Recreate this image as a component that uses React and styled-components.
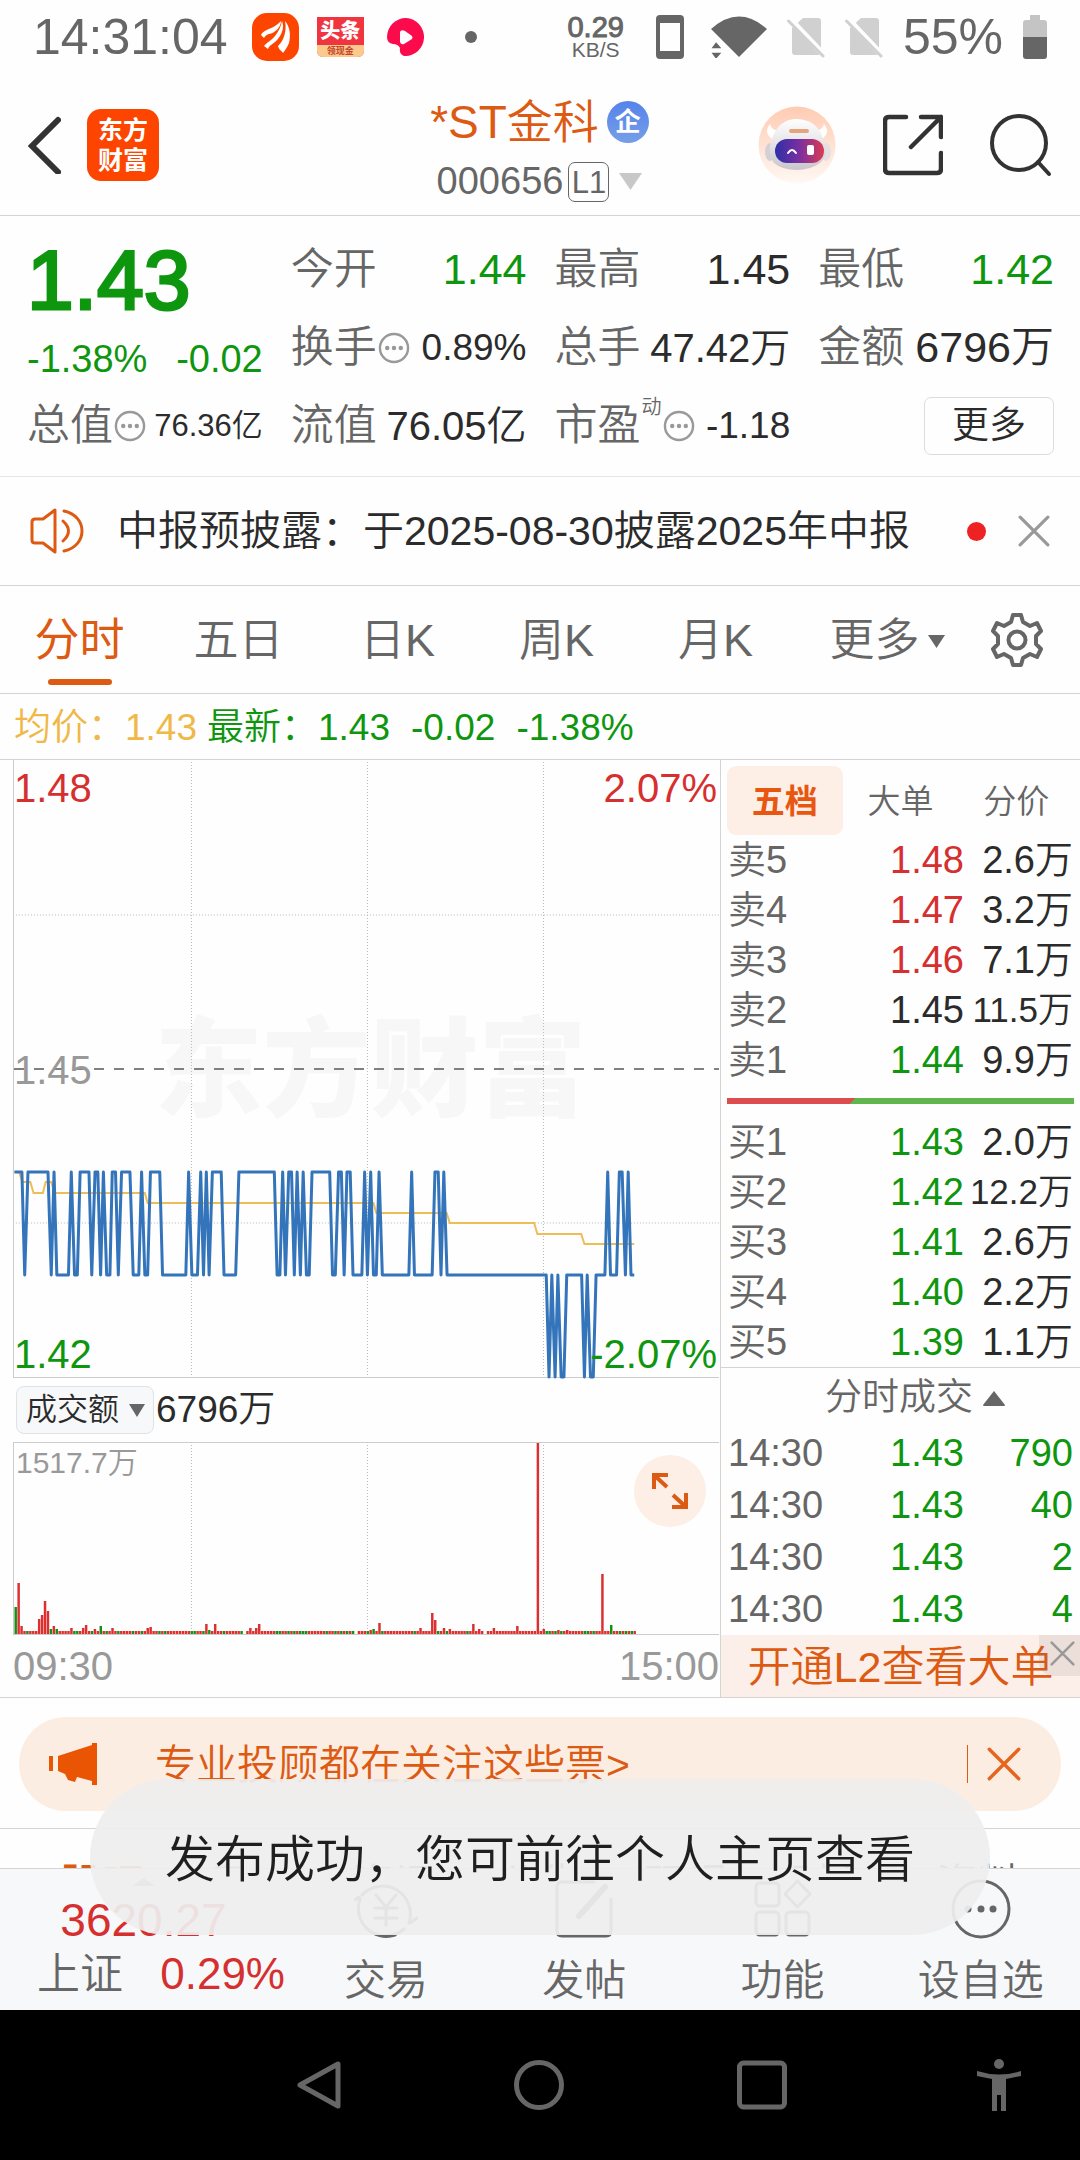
import React from "react";
import styled, { createGlobalStyle, css } from "styled-components";

const c = {
  orange: "#dd5a12",
  brand: "#fe4500",
  green: "#0f960f",
  red: "#d62f2f",
  dark: "#2b2b2b",
  grey: "#666666",
  light: "#999999",
  line: "#d4d4d4",
  peach: "#fdeee6",
};

const GlobalStyle = createGlobalStyle`
  * { box-sizing: border-box; }
  body {
    margin: 0;
    background: #fefefe;
    color: ${c.dark};
    font-family: "Liberation Sans", "Noto Sans CJK SC", sans-serif;
    font-weight: 350;
    line-height: 1.2;
  }
  button, select { font: inherit; color: inherit; background: none; border: 0; padding: 0; margin: 0; }
  button { display: flex; align-items: center; justify-content: center; cursor: pointer; }
  svg { display: block; flex: none; }
  h1, p { margin: 0; font-weight: inherit; }
`;

const Page = styled.div`
  height: 100vh;
  display: flex;
  flex-direction: column;
  overflow: hidden;
  white-space: nowrap;
`;

const Row = styled.div`
  display: flex;
  align-items: center;
  gap: ${(p) => p.$gap || 0}px;
`;

/* status bar */
const StatusBar = styled.div`
  height: 74px;
  flex: none;
  padding: 0 33px;
  display: flex;
  align-items: center;
  justify-content: space-between;
  color: ${c.grey};
  font-size: 50px;
`;
const Clock = styled.span`
  margin-right: 6px;
`;
const NetSpeed = styled.span`
  display: flex;
  flex-direction: column;
  align-items: center;
  margin-right: 12px;
  font-size: 21px;
  line-height: 20px;
  b { font-size: 29px; line-height: 26px; font-weight: 400; -webkit-text-stroke: 1px ${c.grey}; }
`;
const PhoneSlot = styled.span`
  margin-right: 7px;
`;
const NewsBadge = styled.span`
  width: 47px;
  height: 40px;
  margin-right: 5px;
  display: flex;
  flex-direction: column;
  background: #f03540;
  border-radius: 0 0 6px 6px;
  overflow: hidden;
  text-align: center;
  color: #fff;
  font-size: 20px;
  line-height: 28px;
  font-weight: 900;
  small { background: #fbc98c; color: #c4452e; font-size: 9px; line-height: 12px; font-weight: 700; }
`;

/* header */
const Header = styled.header`
  height: 142px;
  flex: none;
  border-bottom: 1px solid ${c.line};
  padding: 0 28px 0 27px;
  display: grid;
  grid-template-columns: 1fr auto 1fr;
  align-items: center;
`;
const AppLogo = styled.span`
  width: 72px;
  height: 72px;
  border-radius: 14px;
  background: ${c.brand};
  color: #fff;
  font-size: 25px;
  line-height: 30px;
  font-weight: 700;
  text-align: center;
  display: flex;
  flex-direction: column;
  justify-content: center;
`;
const TitleBlock = styled.div`
  display: flex;
  flex-direction: column;
  align-items: center;
  gap: 4px;
  padding-top: 10px;
`;
const Title = styled.h1`
  display: flex;
  align-items: center;
  gap: 8px;
  color: ${c.orange};
  font-size: 46px;
  line-height: 60px;
`;
const FirmBadge = styled.span`
  width: 42px;
  height: 42px;
  border-radius: 50%;
  background: linear-gradient(#5583ea, #769ee8);
  color: #fff;
  font-size: 26px;
  line-height: 42px;
  font-weight: 700;
  text-align: center;
`;
const Code = styled.button`
  height: 52px;
  gap: 5px;
  color: ${c.grey};
  font-size: 38px;
`;
const LevelTag = styled.span`
  border: 1px solid ${c.grey};
  border-radius: 7px;
  width: 41px;
  height: 40px;
  font-size: 31px;
  line-height: 40px;
  text-align: center;
  margin-right: 5px;
`;
const Actions = styled.div`
  display: flex;
  align-items: center;
  justify-content: flex-end;
  gap: 47px;
`;

/* quote */
const Quote = styled.section`
  flex: none;
  padding: 15px 26px 11px 27px;
  border-bottom: 1px solid #e6e6e6;
  display: grid;
  grid-template-columns: repeat(4, 1fr);
  grid-auto-rows: 78px;
  column-gap: 28px;
`;
const PriceCell = styled.div`
  grid-row: span 2;
  color: ${c.green};
`;
const Price = styled.div`
  font-size: 84px;
  line-height: 98px;
  font-weight: 400;
  -webkit-text-stroke: 3px ${c.green};
`;
const Change = styled.div`
  display: flex;
  justify-content: space-between;
  font-size: 38px;
  line-height: 60px;
`;
const Cell = styled.div`
  display: flex;
  align-items: center;
  justify-content: space-between;
`;
const Label = styled.span`
  display: flex;
  align-items: center;
  gap: 1px;
  font-size: 43px;
  color: ${c.grey};
`;
const Sup = styled.sup`
  align-self: flex-start;
  font-size: 20px;
  line-height: 14px;
`;
const Value = styled.span`
  font-size: ${(p) => p.$size || 43}px;
  color: ${(p) => p.$color || c.dark};
`;
const MoreButton = styled.button`
  justify-self: end;
  align-self: center;
  width: 130px;
  height: 58px;
  border: 1px solid #dcdcdc;
  border-radius: 7px;
  font-size: 37px;
`;

/* notice */
const Notice = styled.section`
  flex: none;
  height: 109px;
  border-bottom: 1px solid ${c.line};
  padding: 0 30px;
  display: flex;
  align-items: center;
`;
const NoticeText = styled.p`
  flex: 1;
  margin-left: 33px;
  padding-top: 2px;
  font-size: 41px;
`;
const Dot = styled.span`
  width: 19px;
  height: 19px;
  border-radius: 50%;
  background: #ee2222;
`;
const IconButton = styled.button`
  margin-left: ${(p) => p.$left || 0}px;
`;

/* period tabs */
const Tabs = styled.nav`
  flex: none;
  height: 108px;
  border-bottom: 1px solid ${c.line};
  display: grid;
  grid-template-columns: repeat(6, 159fr) 126fr;
`;
const Tab = styled.button`
  position: relative;
  gap: 8px;
  font-size: 45px;
  color: ${c.grey};
  padding: 3px 0 0 ${(p) => (p.$caret ? 25 : 0)}px;
  ${(p) =>
    p.$active &&
    css`
      color: ${c.orange};
      font-weight: 400;
      &::after {
        content: "";
        position: absolute;
        bottom: 8px;
        left: calc(50% - 32px);
        width: 64px;
        height: 6px;
        border-radius: 3px;
        background: ${c.orange};
      }
    `}
`;

const Legend = styled.div`
  flex: none;
  height: 66px;
  border-bottom: 1px solid ${c.line};
  padding: 4px 0 0 14px;
  display: flex;
  align-items: center;
  font-size: 37px;
  color: ${c.green};
`;
const LegendItem = styled.span`
  color: ${(p) => p.$color || "inherit"};
  margin-right: ${(p) => p.$gap}px;
`;

/* market body */
const Market = styled.main`
  flex: none;
  display: grid;
  grid-template-columns: 2fr 1fr;
  border-bottom: 1px solid ${c.line};
`;
const ChartColumn = styled.section`
  padding: 0 1px 0 13px;
`;
const ChartBox = styled.div`
  position: relative;
  height: ${(p) => p.$height}px;
  border-left: 1px solid #cccccc;
  border-bottom: 1px solid #cccccc;
  svg.plot { position: relative; width: 100%; height: 100%; overflow: visible; }
`;
const Watermark = styled.span`
  position: absolute;
  top: 246px;
  left: 8px;
  right: 0;
  text-align: center;
  font-size: 108px;
  line-height: 130px;
  font-weight: 900;
  color: #f7f7f7;
`;
const AxisLabel = styled.span`
  position: absolute;
  font-size: ${(p) => p.$size || 40}px;
  line-height: 40px;
  color: ${(p) => p.$color};
  ${(p) => p.$place}
`;
const VolumeBar = styled.div`
  height: 65px;
  border-bottom: 1px solid #cccccc;
  padding-left: 3px;
  display: flex;
  align-items: center;
  gap: 2px;
  font-size: 37px;
`;
const SelectWrap = styled.label`
  position: relative;
  display: block;
  svg { position: absolute; right: 9px; top: 18px; pointer-events: none; }
`;
const MetricSelect = styled.select`
  appearance: none;
  display: block;
  width: 138px;
  height: 48px;
  padding: 0 0 0 9px;
  border: 1px solid #e0e3e6;
  border-radius: 8px;
  background: #f7f8fa;
  font-size: 31px;
`;
const ExpandButton = styled.button`
  position: absolute;
  right: 13px;
  top: 12px;
  width: 72px;
  height: 72px;
  border-radius: 50%;
  background: ${c.peach};
`;
const TimeAxis = styled.div`
  height: 62px;
  display: flex;
  align-items: center;
  justify-content: space-between;
  font-size: 40px;
  color: ${c.light};
`;

/* order book */
const Book = styled.section`
  border-left: 1px solid ${c.line};
`;
const BookTabs = styled.div`
  display: grid;
  grid-template-columns: repeat(3, 1fr);
  padding: 6px 6px 0;
  height: 75px;
`;
const BookTab = styled.button`
  padding-top: 2px;
  font-size: 33px;
  color: ${c.grey};
  border-radius: 9px;
  ${(p) =>
    p.$active &&
    css`
      background: ${c.peach};
      color: #e8560f;
      font-weight: 700;
    `}
`;
const Table = styled.table`
  width: calc(100% - 14px);
  margin: 0 7px;
  table-layout: fixed;
  border-collapse: collapse;
  font-size: 38px;
  tr { height: ${(p) => p.$row}px; }
  th, td { padding: 0; line-height: 44px; font-weight: inherit; text-align: right; vertical-align: middle; }
  th { width: 110px; color: ${c.grey}; text-align: left; }
  td:last-child { width: 109px; }
`;
const Num = styled.td`
  color: ${(p) => p.$color || c.dark};
  font-size: ${(p) => (p.$small ? 35 : 38)}px;
`;
const RatioBar = styled.div`
  margin: 13px 6px;
  height: 6px;
  background: linear-gradient(135deg, #de4d4d 0 36.5%, #61b54d 36.5%);
`;
const TradesHead = styled.button`
  width: 100%;
  height: 60px;
  padding: 2px 0 0 29px;
  border-top: 1px solid ${c.line};
  gap: 10px;
  font-size: 37px;
  color: ${c.grey};
`;
const LevelTwo = styled.div`
  position: relative;
  height: 62px;
  background: #fcefe9;
  display: flex;
  justify-content: center;
  a { color: ${c.orange}; text-decoration: none; font-size: 43px; line-height: 64px; }
`;
const LevelTwoClose = styled.button`
  position: absolute;
  top: 0;
  right: 0;
  width: 41px;
  height: 41px;
  padding: 0 5px 4px 0;
  justify-content: flex-end;
  border-bottom-left-radius: 14px;
  background: rgba(120, 100, 100, 0.12);
`;

/* promo */
const Promo = styled.aside`
  flex: none;
  margin: 19px 19px 17px;
  height: 94px;
  border-radius: 47px;
  background: #fcede3;
  padding: 0 40px 0 30px;
  display: flex;
  align-items: center;
  color: ${c.orange};
  font-size: 41px;
  a { flex: 1; margin-left: 57px; padding-top: 4px; color: inherit; text-decoration: none; }
`;
const Divider = styled.span`
  width: 1px;
  height: 38px;
  background: ${c.orange};
`;
const Sections = styled.nav`
  flex: 1;
  min-height: 0;
  overflow: hidden;
  border-top: 1px solid ${c.line};
  padding: 26px 29px 0;
  display: grid;
  grid-template-columns: repeat(7, 1fr);
`;
const SectionTab = styled.button`
  height: 60px;
  font-size: 42px;
  color: ${(p) => (p.$active ? c.orange : c.grey)};
  font-weight: ${(p) => (p.$active ? 500 : 350)};
`;

/* bottom bar */
const BottomBar = styled.nav`
  flex: none;
  height: 142px;
  background: #f7f8fa;
  border-top: 1px solid ${c.line};
  display: grid;
  grid-template-columns: 287px repeat(4, 1fr);
`;
const IndexItem = styled.button`
  flex-direction: column;
  justify-content: flex-start;
  padding-top: 9px;
  color: ${c.red};
`;
const IndexValue = styled.span`
  font-size: 46px;
  line-height: 68px;
`;
const IndexChange = styled.span`
  width: 100%;
  padding: 0 2px 0 37px;
  display: flex;
  justify-content: space-between;
  font-size: 44px;
  line-height: 40px;
  em { font-style: normal; color: ${c.grey}; font-size: 43px; }
`;
const NavItem = styled.button`
  flex-direction: column;
  justify-content: flex-start;
  padding-top: 10px;
  gap: 12px;
  color: ${c.grey};
  font-size: 42px;
  line-height: 60px;
`;
const SystemNav = styled.div`
  flex: none;
  height: 150px;
  background: #000;
  display: grid;
  grid-template-columns: 209px 220px 220px 226px 1fr;
`;
const AccessButton = styled.button`
  justify-self: end;
  padding-right: 57px;
`;
const Toast = styled.div`
  position: fixed;
  left: 90px;
  right: 90px;
  bottom: 225px;
  height: 156px;
  padding-top: 5px;
  border-radius: 78px;
  background: rgba(238, 238, 238, 0.93);
  color: #1f1f1f;
  display: flex;
  align-items: center;
  justify-content: center;
  font-size: 50px;
`;

/* ---------- data ---------- */

const PLOT_X = 30;
const PLOT_W = 1514;
const LEVEL = { H: 412, M: 515, L: 617 };

const PRICE_RUNS =
  "H31-47 M53 H60-103 M110 H116 M122-147 H153 M160-166 H172-191 M197 H204-210 M216 H222 M229-236 H241-248 M254 H261-279 M286-298 H304 M311-317 H323-343 M349-399 H405 M412-424 H431 M437 H443 M449 H456-475 M481-506 H513-589 M595-601 H607 M613 H620-626 M632 H638 M645 H651 M658-664 H670-708 M714-720 H727-733 M739 H745-752 M758-777 H783 M789 H796 M802-808 H814 M821-878 H884 M890-928 H934-941 M947 H953 M960-1173 L1179 M1185 L1192 M1198 L1205-1211 M1217-1249 L1255 M1261 L1268-1274 M1280-1299 H1305 M1311-1324 H1330-1336 M1343 H1349 M1355-1362";

const pricePoints = PRICE_RUNS.split(" ")
  .flatMap((run) => run.slice(1).split("-").map((x) => `${x},${LEVEL[run[0]]}`))
  .join(" ");

const AVERAGE =
  "31,412 41,412 48,422 65,422 72,433 92,433 98,422 110,422 117,433 311,433 317,443 802,443 808,453 959,453 966,463 1147,463 1154,474 1248,474 1255,484 1362,484";

const VOLUME_PEAKS = {
  0: [27, 1], 1: [51], 2: [8], 8: [15], 9: [19], 10: [33], 11: [23], 12: [5, 1], 13: [8], 14: [5, 1],
  19: [6], 23: [6], 24: [9], 27: [5], 29: [8, 1], 33: [6], 45: [6], 46: [7], 65: [10], 66: [4, 1], 68: [10],
  80: [6], 82: [6], 83: [10], 121: [4], 122: [5, 1], 124: [11], 138: [6], 142: [21], 143: [14], 146: [6],
  148: [5], 156: [10], 158: [5], 163: [6], 171: [8], 178: [191], 180: [5], 185: [4], 188: [4], 200: [60], 203: [9, 1],
};
const VOLUME_GAPS = [78, 116, 160];
const QUIET_GREEN = [4, 20, 21, 26, 31, 35, 40, 43, 49, 51, 60, 61, 64, 71, 77, 89, 90, 93, 95, 97, 98, 99, 106, 109, 111, 113, 115, 120, 125, 136, 144, 147, 154, 181, 182, 184, 186, 194, 195, 197, 206, 208, 210];

const volumeBars = Array.from({ length: 212 }, (_, i) => {
  const peak = VOLUME_PEAKS[i];
  return {
    x: 31 + i * 6.3,
    h: VOLUME_GAPS.includes(i) ? 0 : peak ? peak[0] : 3,
    green: peak ? Boolean(peak[1]) : QUIET_GREEN.includes(i),
  };
});

const SELLS = [
  ["卖5", "1.48", "2.6万", c.red],
  ["卖4", "1.47", "3.2万", c.red],
  ["卖3", "1.46", "7.1万", c.red],
  ["卖2", "1.45", "11.5万", c.dark],
  ["卖1", "1.44", "9.9万", c.green],
];
const BUYS = [
  ["买1", "1.43", "2.0万", c.green],
  ["买2", "1.42", "12.2万", c.green],
  ["买3", "1.41", "2.6万", c.green],
  ["买4", "1.40", "2.2万", c.green],
  ["买5", "1.39", "1.1万", c.green],
];
const TRADES = ["790", "40", "2", "4"];

/* ---------- drawings ---------- */

const Triangle = ({ w, h, color, up }) => (
  <svg width={w} height={h} viewBox="0 0 20 16" preserveAspectRatio="none" fill={color}>
    <path d={up ? "M10 0 L20 15 Q20 16 19 16 H1 Q0 16 0 15Z" : "M0 0H20L10 16Z"} />
  </svg>
);

const Cross = ({ size, color, width = 3 }) => (
  <svg width={size} height={size} viewBox="0 0 30 30" stroke={color} strokeWidth={width} strokeLinecap="round">
    <path d="M2 2L28 28M28 2L2 28" />
  </svg>
);

const Info = () => (
  <svg width="32" height="32" viewBox="0 0 33 33">
    <circle cx="16.5" cy="16.5" r="14.5" fill="none" stroke="#999" strokeWidth="2.5" />
    <g fill="#999">
      <circle cx="9.5" cy="16.5" r="2.3" />
      <circle cx="16.5" cy="16.5" r="2.3" />
      <circle cx="23.5" cy="16.5" r="2.3" />
    </g>
  </svg>
);

const FundIcon = () => (
  <svg width="47" height="48" viewBox="0 0 47 48">
    <rect width="47" height="48" rx="15" fill="#fe4500" />
    <g fill="#fff">
      <path d="M9 22C11 17 19 16 23 13C26 11 28 9 29 8C29 14 23 20 17 21C14 22 13 23 12 25Z" />
      <path d="M12 33C14 30 19 28 23 23C27 18 29 13 30 8C33 15 29 24 23 29C19 32 17 33 16 36Z" />
      <path d="M33 8C38 14 39 22 37 30C35 35 33 37 31 40C29 37 27 37 26 33C32 28 35 17 33 8Z" />
    </g>
  </svg>
);

const PlayIcon = () => (
  <svg width="38" height="38" viewBox="0 0 38 38">
    <path d="M19 0A18 18 0 1 1 17 38Q12 36 13 30Q11 26 6 26Q0 25 0 19A19 19 0 0 1 19 0Z" fill="#fb0b4b" />
    <path d="M13 14Q14 11 18 13L25 18Q26 19.500 25 21L17 26Q14 27 13 24Z" fill="#fff" />
  </svg>
);

const PhoneIcon = () => (
  <svg width="28" height="44" viewBox="0 0 28 44">
    <path fillRule="evenodd" fill="#666" d="M4 0H24Q28 0 28 4V40Q28 44 24 44H4Q0 44 0 40V4Q0 0 4 0ZM4 8V36H24V8Z" />
  </svg>
);

const WifiIcon = () => (
  <svg width="56" height="42" viewBox="0 0 56 42" fill="#666">
    <path d="M0 13Q28 -12 56 13L28 41Z" />
    <path d="M-1 33L5 25L12 33ZM-1 36H12L5 44Z" stroke="#fefefe" strokeWidth="1.500" />
  </svg>
);

const SimIcon = () => (
  <svg width="38" height="42" viewBox="0 0 38 42">
    <path d="M5 12L16 2H31Q34 2 34 5V36Q34 39 31 39H8Q5 39 5 36Z" fill="#d0d0d0" />
    <path d="M3 3L37 39" stroke="#fefefe" strokeWidth="6" />
    <path d="M1.500 5L36 40" stroke="#d0d0d0" strokeWidth="3" strokeLinecap="round" />
  </svg>
);

const BatteryIcon = () => (
  <svg width="24" height="44" viewBox="0 0 24 44">
    <path d="M7 0H17V5H21Q24 5 24 8V22H0V8Q0 5 3 5H7Z" fill="#c4c4c4" />
    <path d="M0 22H24V41Q24 44 21 44H3Q0 44 0 41Z" fill="#666" />
  </svg>
);

const BackIcon = () => (
  <svg width="34" height="58" viewBox="0 0 34 58" fill="none" stroke="#333" strokeWidth="6" strokeLinecap="round">
    <path d="M31 4L5 30L31 56" />
  </svg>
);

const RobotIcon = () => (
  <svg width="78" height="78" viewBox="0 0 78 78">
    <defs>
      <linearGradient id="halo" x1="0" y1="0" x2="0" y2="1">
        <stop offset="0" stopColor="#ffcbb2" />
        <stop offset="1" stopColor="#fff8f4" />
      </linearGradient>
      <linearGradient id="visor">
        <stop offset="0" stopColor="#2e2fa8" />
        <stop offset="0.5" stopColor="#7a2fa0" />
        <stop offset="1" stopColor="#dc3b52" />
      </linearGradient>
      <linearGradient id="shell" x1="0" y1="0" x2="0" y2="1">
        <stop offset="0" stopColor="#ffffff" />
        <stop offset="1" stopColor="#c9c5cc" />
      </linearGradient>
    </defs>
    <circle cx="39" cy="39" r="38.500" fill="url(#halo)" />
    <path d="M12 18Q5 26 14 33L24 24Q14 26 12 18ZM66 18Q73 26 64 33L54 24Q64 26 66 18Z" fill="#fff" />
    <ellipse cx="12" cy="46" rx="5" ry="9" fill="#d4cfd4" />
    <ellipse cx="68" cy="46" rx="5" ry="9" fill="#e6dfe2" />
    <path d="M39 13Q58 14 64 30Q72 48 62 57Q52 64 39 64Q24 64 16 57Q8 47 15 30Q22 13 39 13Z" fill="url(#shell)" />
    <rect x="31" y="23" width="20" height="4" rx="2" fill="#e5a57c" />
    <rect x="17" y="33" width="49" height="24" rx="12" fill="url(#visor)" />
    <path d="M30 47Q34 41 38 47" fill="none" stroke="#fff" strokeWidth="2" strokeLinecap="round" />
    <rect x="49" y="39" width="7" height="10" rx="2" fill="#fff" />
  </svg>
);

const ShareIcon = () => (
  <svg width="60" height="62" viewBox="0 0 60 62" fill="none" stroke="#333" strokeWidth="4.500" strokeLinecap="round" strokeLinejoin="round">
    <path d="M23 3H6Q2 3 2 7V55Q2 59 6 59H54Q58 59 58 55V39" />
    <path d="M38 3H58V23M58 3L28 33" />
  </svg>
);

const SearchIcon = () => (
  <svg width="62" height="64" viewBox="0 0 62 64" fill="none" stroke="#333" strokeWidth="4" strokeLinecap="round">
    <circle cx="29" cy="30" r="27" />
    <path d="M48 49L59 61" />
  </svg>
);

const SpeakerIcon = () => (
  <svg width="54" height="46" viewBox="0 0 54 46" fill="none" stroke="#dd5a12" strokeWidth="3" strokeLinecap="round" strokeLinejoin="round">
    <path d="M25 2L13 11H5Q2 11 2 14V32Q2 35 5 35H13L25 44Z" />
    <path d="M33 13Q44 23 33 33M34 3C58 8 58 38 34 43" />
  </svg>
);

const GearIcon = () => (
  <svg width="54" height="54" viewBox="0 0 54 54" fill="none" stroke="#666" strokeWidth="4" strokeLinejoin="round">
    <path d="M23 2H31L33 9L40 13L47 10L51 18L46 23V31L51 36L47 44L40 41L33 45L31 52H23L21 45L14 41L7 44L3 36L8 31V23L3 18L7 10L14 13L21 9Z" />
    <circle cx="27" cy="27" r="8.500" />
  </svg>
);

const ExpandIcon = () => (
  <svg width="38" height="38" viewBox="0 0 38 38" fill="none" stroke="#dd5a12" strokeWidth="4">
    <path d="M3 17V3H17M3 3L16 15M35 21V35H21M35 35L22 23" />
  </svg>
);

const HornIcon = () => (
  <svg width="49" height="42" viewBox="0 0 49 42" fill="#ea5504">
    <path d="M0 13H4V28H0ZM9 13L43 2V0H48V42H43V38L28 34L26 39L19 37L16 31L9 28Z" />
  </svg>
);

const navIcon = { width: 64, height: 60, viewBox: "0 0 64 60", fill: "none", stroke: "#666", strokeWidth: 3, strokeLinecap: "round" };

const TradeIcon = () => (
  <svg {...navIcon}>
    <path d="M8 16A28 28 0 0 1 55 44M56 44L63 39M41 56A28 28 0 0 1 6 20M5 18L1 21M12 49A28 28 0 0 0 50 50" />
    <path d="M22 16L32 28L42 16M21 29H43M21 39H43M32 28V46" />
  </svg>
);
const PostIcon = () => (
  <svg {...navIcon}>
    <path d="M42 3H10Q5 3 5 8V52Q5 57 10 57H54Q59 57 59 52V20" />
    <path d="M53 8L27 37" strokeWidth="6" />
  </svg>
);
const FeatureIcon = () => (
  <svg {...navIcon}>
    <rect x="5" y="4" width="23" height="23" rx="4" />
    <rect x="5" y="33" width="23" height="23" rx="4" />
    <rect x="35" y="33" width="23" height="23" rx="4" />
    <path d="M46.500 2L59 15L46.500 28L34 15Z" strokeLinejoin="round" />
  </svg>
);
const DotsIcon = () => (
  <svg {...navIcon}>
    <circle cx="32" cy="30" r="28" />
    <g fill="#666" stroke="none">
      <circle cx="19" cy="30" r="3.500" />
      <circle cx="32" cy="30" r="3.500" />
      <circle cx="44" cy="30" r="3.500" />
    </g>
  </svg>
);

const sysIcon = { width: 52, height: 52, viewBox: "0 0 52 52", fill: "none", stroke: "#666", strokeWidth: 5 };

const OrderTable = ({ rows, label }) => (
  <Table $row={50} aria-label={label}>
    <tbody>
      {rows.map(([name, price, vol, color]) => (
        <tr key={name}>
          <th scope="row">{name}</th>
          <Num $color={color}>{price}</Num>
          <Num $small={vol.length > 4}>{vol}</Num>
        </tr>
      ))}
    </tbody>
  </Table>
);

const Stat = ({ label, value, size, color, info, sup }) => (
  <Cell>
    <Label>
      {label}
      {sup && <Sup>{sup}</Sup>}
      {info && <Info />}
    </Label>
    <Value $size={size} $color={color}>{value}</Value>
  </Cell>
);

const GridLines = ({ height, rows = [] }) => (
  <g stroke="#b8b8b8" strokeWidth="1" strokeDasharray="1 2">
    {[411, 789, 1167].map((x) => (
      <path key={x} d={`M${x} 2V${height}`} vectorEffect="non-scaling-stroke" />
    ))}
    {rows.map((y) => (
      <path key={y} d={`M34 ${y}H1544`} vectorEffect="non-scaling-stroke" />
    ))}
  </g>
);

export default function App() {
  return (
    <Page>
      <GlobalStyle />
      <StatusBar>
        <Row $gap={18}>
          <Clock>14:31:04</Clock>
          <FundIcon />
          <NewsBadge>
            头条<small>领现金</small>
          </NewsBadge>
          <PlayIcon />
          <svg width="54" height="12" viewBox="0 0 54 12"><circle cx="28" cy="6" r="6" fill="#666" /></svg>
        </Row>
        <Row $gap={20}>
          <NetSpeed><b>0.29</b>KB/S</NetSpeed>
          <PhoneSlot><PhoneIcon /></PhoneSlot>
          <WifiIcon />
          <SimIcon />
          <SimIcon />
          <span>55%</span>
          <BatteryIcon />
        </Row>
      </StatusBar>

      <Header>
        <Row $gap={26}>
          <button aria-label="返回"><BackIcon /></button>
          <AppLogo><span>东方</span><span>财富</span></AppLogo>
        </Row>
        <TitleBlock>
          <Title>*ST金科<FirmBadge>企</FirmBadge></Title>
          <Code>
            000656<LevelTag>L1</LevelTag>
            <Triangle w={23} h={17} color="#c8c8c8" />
          </Code>
        </TitleBlock>
        <Actions>
          <button aria-label="智能助手"><RobotIcon /></button>
          <button aria-label="分享"><ShareIcon /></button>
          <button aria-label="搜索"><SearchIcon /></button>
        </Actions>
      </Header>

      <Quote>
        <PriceCell>
          <Price>1.43</Price>
          <Change><span>-1.38%</span><span>-0.02</span></Change>
        </PriceCell>
        <Stat label="今开" value="1.44" color={c.green} />
        <Stat label="最高" value="1.45" />
        <Stat label="最低" value="1.42" color={c.green} />
        <Stat label="换手" value="0.89%" size={37} info />
        <Stat label="总手" value="47.42万" size={40} />
        <Stat label="金额" value="6796万" size={43} />
        <Stat label="总值" value="76.36亿" size={31} info />
        <Stat label="流值" value="76.05亿" size={40} />
        <Stat label="市盈" value="-1.18" size={37} info sup="动" />
        <MoreButton>更多</MoreButton>
      </Quote>

      <Notice>
        <SpeakerIcon />
        <NoticeText>中报预披露：于2025-08-30披露2025年中报</NoticeText>
        <Dot />
        <IconButton $left={32} aria-label="关闭公告"><Cross size={32} color="#999" /></IconButton>
      </Notice>

      <Tabs>
        <Tab $active>分时</Tab>
        <Tab>五日</Tab>
        <Tab>日K</Tab>
        <Tab>周K</Tab>
        <Tab>月K</Tab>
        <Tab $caret>更多<Triangle w={17} h={13} color="#666" /></Tab>
        <button aria-label="设置"><GearIcon /></button>
      </Tabs>

      <Legend>
        <LegendItem $color="#f0b846" $gap={10}>均价：1.43</LegendItem>
        <LegendItem $gap={21}>最新：1.43</LegendItem>
        <LegendItem $gap={21}>-0.02</LegendItem>
        <LegendItem $gap={0}>-1.38%</LegendItem>
      </Legend>

      <Market>
        <ChartColumn>
          <ChartBox $height={618}>
            <Watermark>东方财富</Watermark>
            <svg className="plot" viewBox={`${PLOT_X} 0 ${PLOT_W} 617`} preserveAspectRatio="none" fill="none">
              <GridLines height={617} rows={[155, 463]} />
              <path d="M30 309H1544" stroke="#808080" strokeWidth="2" strokeDasharray="10 10" vectorEffect="non-scaling-stroke" />
              <polyline points={AVERAGE} stroke="#efbd58" strokeWidth="2" vectorEffect="non-scaling-stroke" />
              <polyline points={pricePoints} stroke="#3474ba" strokeWidth="3" strokeLinejoin="round" vectorEffect="non-scaling-stroke" />
            </svg>
            <AxisLabel $color={c.red} $place="top:8px;left:0;">1.48</AxisLabel>
            <AxisLabel $color={c.red} $place="top:8px;right:2px;">2.07%</AxisLabel>
            <AxisLabel $color={c.light} $place="top:290px;left:0;">1.45</AxisLabel>
            <AxisLabel $color={c.green} $place="bottom:3px;left:0;">1.42</AxisLabel>
            <AxisLabel $color={c.green} $place="bottom:3px;right:2px;">-2.07%</AxisLabel>
          </ChartBox>
          <VolumeBar>
            <SelectWrap>
              <MetricSelect aria-label="指标" defaultValue="成交额">
                <option>成交额</option>
              </MetricSelect>
              <Triangle w={16} h={13} color="#666" />
            </SelectWrap>
            <span>6796万</span>
          </VolumeBar>
          <ChartBox $height={192}>
            <svg className="plot" viewBox={`${PLOT_X} 0 ${PLOT_W} 191`} preserveAspectRatio="none" fill="none">
              <GridLines height={191} />
              {volumeBars.map((b) => (
                <rect key={b.x} x={b.x} y={191 - b.h} width="5.300" height={b.h} fill={b.green ? "#159015" : "#dc2f2f"} />
              ))}
            </svg>
            <AxisLabel $size={30} $color={c.light} $place="top:0;left:2px;">1517.7万</AxisLabel>
            <ExpandButton aria-label="全屏"><ExpandIcon /></ExpandButton>
          </ChartBox>
          <TimeAxis><span>09:30</span><span>15:00</span></TimeAxis>
        </ChartColumn>

        <Book>
          <BookTabs>
            <BookTab $active>五档</BookTab>
            <BookTab>大单</BookTab>
            <BookTab>分价</BookTab>
          </BookTabs>
          <OrderTable rows={SELLS} label="卖盘" />
          <RatioBar />
          <OrderTable rows={BUYS} label="买盘" />
          <TradesHead>分时成交<Triangle w={22} h={15} color="#666" up /></TradesHead>
          <Table $row={52} aria-label="分时成交">
            <tbody>
              {TRADES.map((n) => (
                <tr key={n}>
                  <th scope="row">14:30</th>
                  <Num $color={c.green}>1.43</Num>
                  <Num $color={c.green}>{n}</Num>
                </tr>
              ))}
            </tbody>
          </Table>
          <LevelTwo>
            <a href="#level2">开通L2查看大单</a>
            <LevelTwoClose aria-label="关闭"><Cross size={25} color="#999" /></LevelTwoClose>
          </LevelTwo>
        </Book>
      </Market>

      <Promo>
        <HornIcon />
        <a href="#advisor">专业投顾都在关注这些票&gt;</a>
        <Divider />
        <IconButton $left={19} aria-label="关闭推广"><Cross size={34} color="#e8641c" /></IconButton>
      </Promo>

      <Sections>
        <SectionTab $active>股吧</SectionTab>
        <SectionTab>盘口</SectionTab>
        <SectionTab>资讯</SectionTab>
        <SectionTab>公告</SectionTab>
        <SectionTab>研报</SectionTab>
        <SectionTab>财务</SectionTab>
        <SectionTab>资料</SectionTab>
      </Sections>

      <BottomBar>
        <IndexItem>
          <Triangle w={21} h={8} color="#999" up />
          <IndexValue>3620.27</IndexValue>
          <IndexChange><em>上证</em>0.29%</IndexChange>
        </IndexItem>
        <NavItem><TradeIcon />交易</NavItem>
        <NavItem><PostIcon />发帖</NavItem>
        <NavItem><FeatureIcon />功能</NavItem>
        <NavItem><DotsIcon />设自选</NavItem>
      </BottomBar>

      <SystemNav>
        <span />
        <button aria-label="后退">
          <svg {...sysIcon}><path d="M45 5V47L7 26Z" strokeLinejoin="round" /></svg>
        </button>
        <button aria-label="主屏幕">
          <svg {...sysIcon}><circle cx="26" cy="26" r="22.500" /></svg>
        </button>
        <button aria-label="最近任务">
          <svg {...sysIcon}><rect x="3.500" y="4" width="45" height="44" rx="4" /></svg>
        </button>
        <AccessButton aria-label="无障碍">
          <svg width="48" height="52" viewBox="0 0 48 52" fill="#666">
            <circle cx="24" cy="5" r="5" />
            <path d="M2 12Q24 19 46 12V17L31 20V52H26V36H22V52H17V20L2 17Z" />
          </svg>
        </AccessButton>
      </SystemNav>

      <Toast role="status">发布成功，您可前往个人主页查看</Toast>
    </Page>
  );
}
